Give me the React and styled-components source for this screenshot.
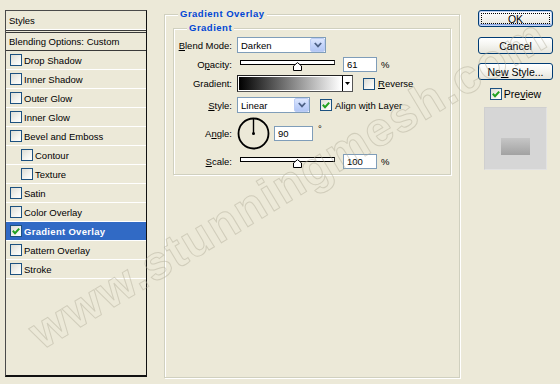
import React from "react";
import styled, { createGlobalStyle, css } from "styled-components";

const GlobalStyle = createGlobalStyle`
  html, body {
    margin: 0;
    padding: 0;
    background: #ece9d8;
  }
  body {
    font-family: "Liberation Sans", Arial, sans-serif;
  }
`;

const styleItems = [
  { name: "Drop Shadow" },
  { name: "Inner Shadow" },
  { name: "Outer Glow" },
  { name: "Inner Glow" },
  { name: "Bevel and Emboss" },
  { name: "Contour", indent: true },
  { name: "Texture", indent: true },
  { name: "Satin" },
  { name: "Color Overlay" },
  { name: "Gradient Overlay", checked: true, active: true },
  { name: "Pattern Overlay" },
  { name: "Stroke" },
];

const Dialog = styled.div`
  position: relative;
  width: 560px;
  height: 384px;
  overflow: hidden;
  box-sizing: border-box;
  padding-left: 5px;
  display: flex;
  background: #ece9d8;
  font-family: "Liberation Sans", Arial, sans-serif;
  font-size: 9.5px;
  color: #000;
`;

/* left list */
const StylesPanel = styled.div`
  width: 142px;
  height: 367px;
  margin-top: 10px;
  box-sizing: border-box;
  border: 1px solid #4a4a4a;
  border-right-color: #111;
  border-bottom: 2px solid #111;
  display: flex;
  flex-direction: column;
`;

const PanelHead = styled.div`
  height: ${(p) => (p.$closing ? 18 : 19)}px;
  flex-shrink: 0;
  display: flex;
  align-items: center;
  padding-left: 3px;
  box-sizing: border-box;
  border-bottom: ${(p) => (p.$closing ? "1px solid #3a3a3a" : "1px solid #fff")};
`;

const DoubleRule = styled.div`
  height: 3px;
  flex-shrink: 0;
  box-sizing: border-box;
  border-top: 1px solid #3a3a3a;
  border-bottom: 1px solid #3a3a3a;
`;

const StyleRow = styled.div`
  height: 19px;
  flex-shrink: 0;
  box-sizing: border-box;
  border-bottom: 1px solid #fff;
  display: flex;
  align-items: center;
  gap: 2px;
  padding-left: ${(p) => (p.$indent ? 15 : 4)}px;
  ${(p) =>
    p.$active &&
    css`
      background: #316ac5;
      color: #fff;
      font-weight: bold;
      letter-spacing: 0.3px;
    `}
`;

/* check box */
const Box = styled.span`
  width: 12px;
  height: 12px;
  flex-shrink: 0;
  box-sizing: border-box;
  border: 1px solid #1c5180;
  background: linear-gradient(135deg, #dcdcd5 0%, #f4f4f0 60%, #fff 100%);
  display: inline-flex;
  align-items: center;
  justify-content: center;
`;

const Check = ({ checked }) => (
  <Box>
    {checked && (
      <svg width="8" height="8" viewBox="0 0 8 8">
        <polyline
          points="0.8,3.8 3,6.2 7.2,1.6"
          fill="none"
          stroke="#21a121"
          strokeWidth="2"
        />
      </svg>
    )}
  </Box>
);

/* middle group boxes */
const Middle = styled.div`
  width: 296px;
  margin-left: 17px;
  padding: 8px 0 6px;
  box-sizing: border-box;
  display: flex;
  flex-direction: column;
`;

const Group = styled.fieldset`
  margin: ${(p) => (p.$inner ? "2px 0 0" : "0")};
  padding: ${(p) => (p.$inner ? "0 8px 5px" : "0 8px")};
  min-width: 0;
  flex: ${(p) => (p.$inner ? "none" : "1")};
  border: 1px solid #d0d0bf;
  box-shadow: inset 1px 1px 0 #fff, 1px 1px 0 #fff;
`;

const Legend = styled.legend`
  margin-left: 5px;
  padding: 0 2px;
  background: #ece9d8;
  color: #0046d5;
  font-weight: bold;
  font-size: 9.5px;
  line-height: 12px;
  letter-spacing: 0.5px;
`;

const Row = styled.div`
  display: flex;
  align-items: center;
  height: ${(p) => p.$h}px;
  margin-top: ${(p) => p.$mt}px;
`;

const Label = styled.div`
  width: 50px;
  margin-right: 5px;
  flex-shrink: 0;
  display: flex;
  justify-content: flex-end;
  white-space: nowrap;
`;

const Key = styled.span`
  text-decoration: underline;
`;

const Combo = styled.div`
  width: ${(p) => p.$w}px;
  height: 16px;
  flex-shrink: 0;
  box-sizing: border-box;
  border: 1px solid #7f9db9;
  background: #fff;
  display: flex;
  align-items: center;
  justify-content: space-between;
  padding-left: 3px;
`;

const ComboArrow = styled.div`
  width: 15px;
  height: 14px;
  box-sizing: border-box;
  border: 1px solid #bccdf5;
  border-radius: 2px;
  background: linear-gradient(180deg, #dde7fd 0%, #c2d3fa 55%, #b2c6f4 100%);
  display: flex;
  align-items: center;
  justify-content: center;
`;

const Chevron = () => (
  <svg width="8" height="6" viewBox="0 0 8 6">
    <polyline
      points="0.8,1 4,4.4 7.2,1"
      fill="none"
      stroke="#4d6185"
      strokeWidth="1.8"
    />
  </svg>
);

const Slider = styled.div`
  position: relative;
  width: 95px;
  height: 15px;
  margin-left: 3px;
  flex-shrink: 0;
  display: flex;
  flex-direction: column;
`;

const Track = styled.div`
  margin-top: 3px;
  height: 5px;
  box-sizing: border-box;
  border: 1px solid #000;
  border-right-color: #333;
  background: #fff;
`;

const Thumb = styled.svg`
  position: absolute;
  top: 5px;
`;

const NumBox = styled.div`
  width: ${(p) => p.$w}px;
  height: 15px;
  margin-left: ${(p) => p.$ml}px;
  flex-shrink: 0;
  box-sizing: border-box;
  border: 1px solid #7f9db9;
  background: #fff;
  padding-left: 3px;
  display: flex;
  align-items: center;
`;

const Unit = styled.span`
  margin-left: ${(p) => p.$ml}px;
  ${(p) =>
    p.$raised &&
    css`
      align-self: flex-start;
      margin-top: 6px;
    `}
`;

const GradientBox = styled.div`
  width: 116px;
  height: 17px;
  flex-shrink: 0;
  box-sizing: border-box;
  border: 1px solid #555;
  border-top-color: #222;
  border-left-color: #222;
  display: flex;
  background: #fff;
`;

const GradientFill = styled.div`
  flex: 1;
  margin: 1px;
  background: linear-gradient(90deg, #000 0%, #fff 100%);
`;

const GradientDrop = styled.div`
  width: 9px;
  border-left: 1px solid #000;
  display: flex;
  align-items: center;
  justify-content: center;
`;

const Inline = styled.div`
  display: flex;
  align-items: center;
  gap: 3px;
  margin-left: ${(p) => p.$ml}px;
  white-space: nowrap;
`;

const Dial = () => (
  <svg width="33" height="33" viewBox="0 0 33 33">
    <circle cx="16.5" cy="16.5" r="15" fill="none" stroke="#000" strokeWidth="1.8" />
    <line x1="16.5" y1="16.5" x2="16.5" y2="2" stroke="#000" strokeWidth="1.4" />
    <circle cx="16.5" cy="16.5" r="1.5" fill="#000" />
  </svg>
);

const SliderControl = ({ pos }) => (
  <Slider>
    <Track />
    <Thumb width="9" height="9" viewBox="0 0 9 9" style={{ left: pos * 95 - 4.5 }}>
      <polygon
        points="0.5,8.5 0.5,4 4.5,0.6 8.5,4 8.5,8.5"
        fill="#fff"
        stroke="#000"
        strokeWidth="1"
      />
    </Thumb>
  </Slider>
);

/* right column */
const Side = styled.div`
  width: 75px;
  margin-left: 18px;
  padding-top: 10px;
  display: flex;
  flex-direction: column;
  font-size: 10.5px;
`;

const Button = styled.button`
  height: 17px;
  margin-top: ${(p) => p.$mt}px;
  padding: 0;
  border: 1px solid #003c74;
  border-radius: 3px;
  background: linear-gradient(180deg, #fff 0%, #f5f5f1 45%, #e6e5dc 100%);
  font-family: "Liberation Sans", Arial, sans-serif;
  font-size: 10.5px;
  color: #000;
  ${(p) =>
    p.$default &&
    css`
      box-shadow: inset 0 0 0 1px #c3d4f5, inset 0 -1px 0 1px #8aa7e6;
      outline: 1px dotted #000;
      outline-offset: -4px;
    `}
`;

const PreviewToggle = styled.div`
  margin-top: 8px;
  height: 12px;
  display: flex;
  align-items: center;
  justify-content: center;
  gap: 2px;
`;

const Swatch = styled.div`
  width: 63px;
  height: 63px;
  margin-top: 7px;
  align-self: center;
  box-sizing: border-box;
  border: 1px solid #e2e2e2;
  border-top-color: #cfcfcf;
  border-left-color: #cfcfcf;
  background: #d6d6d6;
  display: flex;
  justify-content: center;
  padding-top: 30px;
`;

const SwatchSample = styled.div`
  width: 29px;
  height: 17px;
  background: linear-gradient(180deg, #c6c6c6 0%, #a2a2a2 100%);
`;

const Watermark = styled.div`
  position: absolute;
  left: 288px;
  top: 184px;
  transform: translate(-50%, -50%) rotate(-31deg);
  font-family: "Liberation Sans", Arial, sans-serif;
  font-weight: bold;
  font-size: 48px;
  letter-spacing: 1.5px;
  line-height: 1;
  white-space: nowrap;
  color: transparent;
  -webkit-text-stroke: 1px rgba(175, 170, 150, 0.45);
  pointer-events: none;
`;

export default function App() {
  return (
    <>
      <GlobalStyle />
      <Dialog>
        <StylesPanel>
          <PanelHead>Styles</PanelHead>
          <DoubleRule />
          <PanelHead $closing>Blending Options: Custom</PanelHead>
          {styleItems.map((item) => (
            <StyleRow key={item.name} $indent={item.indent} $active={item.active}>
              <Check checked={item.checked} />
              <span>{item.name}</span>
            </StyleRow>
          ))}
        </StylesPanel>

        <Middle>
          <Group>
            <Legend>Gradient Overlay</Legend>
            <Group $inner>
              <Legend>Gradient</Legend>

              <Row $h={16} $mt={3}>
                <Label>
                  <Key>B</Key>lend Mode:
                </Label>
                <Combo $w={89}>
                  <span>Darken</span>
                  <ComboArrow>
                    <Chevron />
                  </ComboArrow>
                </Combo>
              </Row>

              <Row $h={15} $mt={4}>
                <Label>
                  O<Key>p</Key>acity:
                </Label>
                <SliderControl pos={0.61} />
                <NumBox $w={34} $ml={8}>61</NumBox>
                <Unit $ml={4}>%</Unit>
              </Row>

              <Row $h={17} $mt={3}>
                <Label>Gradient:</Label>
                <GradientBox>
                  <GradientFill />
                  <GradientDrop>
                    <svg width="5" height="3" viewBox="0 0 5 3">
                      <polygon points="0,0 5,0 2.5,3" fill="#000" />
                    </svg>
                  </GradientDrop>
                </GradientBox>
                <Inline $ml={10}>
                  <Check />
                  <span>
                    <Key>R</Key>everse
                  </span>
                </Inline>
              </Row>

              <Row $h={16} $mt={5}>
                <Label>
                  <Key>S</Key>tyle:
                </Label>
                <Combo $w={73}>
                  <span>Linear</span>
                  <ComboArrow>
                    <Chevron />
                  </ComboArrow>
                </Combo>
                <Inline $ml={10}>
                  <Check checked />
                  <span>
                    Align w<Key>i</Key>th Layer
                  </span>
                </Inline>
              </Row>

              <Row $h={33} $mt={4}>
                <Label>
                  A<Key>n</Key>gle:
                </Label>
                <Dial />
                <NumBox $w={39} $ml={4}>90</NumBox>
                <Unit $ml={5} $raised>
                  °
                </Unit>
              </Row>

              <Row $h={15} $mt={4}>
                <Label>
                  <Key>S</Key>cale:
                </Label>
                <SliderControl pos={0.61} />
                <NumBox $w={34} $ml={8}>100</NumBox>
                <Unit $ml={4}>%</Unit>
              </Row>
            </Group>
          </Group>
        </Middle>

        <Side>
          <Button $default $mt={0}>OK</Button>
          <Button $mt={10}>Cancel</Button>
          <Button $mt={9}>
            Ne<Key>w</Key> Style...
          </Button>
          <PreviewToggle>
            <Check checked />
            <span>
              Pre<Key>v</Key>iew
            </span>
          </PreviewToggle>
          <Swatch>
            <SwatchSample />
          </Swatch>
        </Side>

        <Watermark>www.stunningmesh.com</Watermark>
      </Dialog>
    </>
  );
}
